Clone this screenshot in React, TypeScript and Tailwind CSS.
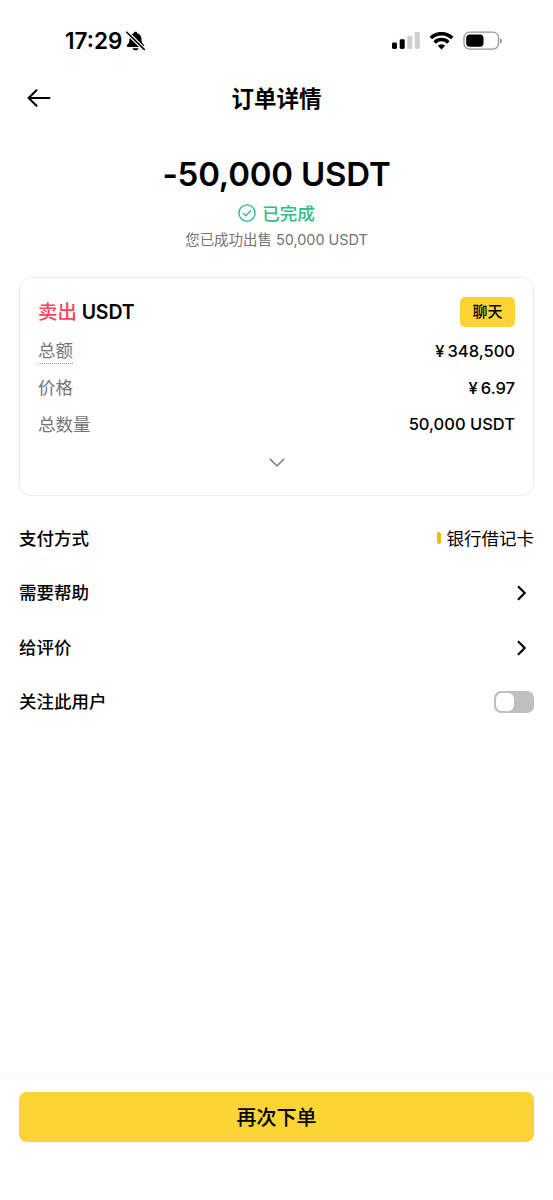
import { useState } from 'react'

const details = [
  { label: '总额', value: '348,500', currency: true, hint: true },
  { label: '价格', value: '6.97', currency: true, hint: false },
  { label: '总数量', value: '50,000 USDT', currency: false, hint: false },
]

function StatusBar() {
  return (
    <div className="flex h-[82px] items-center justify-between pl-[65px] pr-[50px]">
      <div className="flex items-center gap-1">
        <span className="text-[22.5px] font-semibold leading-none">17:29</span>
        <svg className="h-5 w-[19px]" viewBox="0 0 19 20">
          <path
            d="M9.5.8c-1.1 0-1.8.7-1.9 1.5C4.9 3.2 3.5 5.4 3.5 8.2c0 3.3-.9 4.1-2.3 5.600-.9 1-.4 2.200.8 2.200h15c1.200 0 1.700-1.200.8-2.200-1.400-1.500-2.300-2.300-2.300-5.600 0-2.800-1.400-5-4.100-5.900C11.300 1.500 10.600.8 9.500.8zM6.500 17.200h6c-.3 1.300-1.500 2.100-3 2.100s-2.700-.8-3-2.100z"
            fill="black"
          />
          <path d="M.6 1 18.400 18.600" stroke="#fefefe" strokeWidth="4" />
          <path d="M.8 1.200 18.200 18.400" stroke="black" strokeWidth="1.6" strokeLinecap="round" />
        </svg>
      </div>

      <div className="flex items-center">
        <svg className="h-[18px] w-[28px]" viewBox="0 0 28 18">
          <rect x="0" y="10.5" width="5" height="6.5" rx="1.4" fill="black" />
          <rect x="7.7" y="7.3" width="5" height="9.7" rx="1.4" fill="black" />
          <rect x="15.3" y="3.8" width="5" height="13.2" rx="1.4" fill="#cfcfcf" />
          <rect x="22.8" y="0" width="5" height="17" rx="1.4" fill="#cfcfcf" />
        </svg>
        <svg className="ml-[9px] h-[18px] w-[25px]" viewBox="0 0 25 18" fill="none" stroke="black" strokeWidth="3.5">
          <path d="M1.8 6a15.400 15.400 0 0 1 21.400 0" />
          <path d="M5.7 10.400a9.700 9.700 0 0 1 13.600 0" />
          <path d="M12.5 17.400 8.800 13.700a5.300 5.300 0 0 1 7.400 0z" fill="black" stroke="none" />
        </svg>
        <svg className="ml-[9px] h-5 w-10" viewBox="0 0 40 20">
          <rect x="1" y="1.2" width="34.5" height="17" rx="5.6" fill="none" stroke="#979797" strokeWidth="1.3" />
          <rect x="3.2" y="3.6" width="17.3" height="12.2" rx="3.6" fill="black" />
          <path d="M37 7.200c1.300.4 2 1.400 2 2.700s-.7 2.300-2 2.700z" fill="#979797" />
        </svg>
      </div>
    </div>
  )
}

function ArrowRight() {
  return (
    <svg className="mr-2 h-4 w-[9px]" viewBox="0 0 9 16" fill="none" stroke="black" strokeWidth="2.1">
      <path d="m1 1.200 6.700 6.800L1 14.800" />
    </svg>
  )
}

function Toggle() {
  const [on, setOn] = useState(false)

  return (
    <button
      onClick={() => setOn(!on)}
      className={`flex h-[22px] w-10 items-center rounded-[7px] px-[2px] ${on ? 'justify-end bg-[#fcd535]' : 'justify-start bg-[#bfbfbf]'}`}
    >
      <span className="h-[18px] w-[18px] rounded-[6px] bg-white" />
    </button>
  )
}

export default function App() {
  return (
    <div className="flex h-[1200px] w-full flex-col bg-[#fefefe] font-['Inter','Noto_Sans_CJK_SC',sans-serif] text-black">
      <StatusBar />

      {/* Header */}
      <header className="grid h-8 grid-cols-3 items-center px-[27px]">
        <svg className="h-[18px] w-6" viewBox="0 0 24 18" fill="none" stroke="black" strokeWidth="2" strokeLinecap="round">
          <path d="M22.500 9H1.800M9.500 1.200 1.600 9l7.900 7.800" />
        </svg>
        <h1 className="pt-[2px] text-center text-[22.5px] font-semibold leading-[30px]">订单详情</h1>
      </header>

      {/* Amount */}
      <section className="mt-[37px] flex flex-col items-center">
        <div className="text-[33px] font-semibold leading-[46px] tracking-[-0.2px]">-50,000 USDT</div>
        <div className="mt-1 flex h-6 items-center gap-[6px] text-[17.5px] leading-[22px] text-[#2ebd85]">
          <svg className="h-[18px] w-[18px]" viewBox="0 0 18 18" fill="none" stroke="#2ebd85" strokeWidth="1.4">
            <circle cx="9" cy="9" r="8.1" />
            <path d="m5.200 9.200 2.700 2.600 5-5.200" />
          </svg>
          <span className="pt-px font-medium">已完成</span>
        </div>
        <div className="mt-1 pt-px text-[14.5px] leading-5 tracking-[-0.05px] text-[#757575]">您已成功出售 50,000 USDT</div>
      </section>

      {/* Order card */}
      <section className="mx-[19px] mt-[27px] h-[219px] rounded-xl border border-[#ebebeb] px-[18px] pt-[18px]">
        <div className="flex h-[31px] items-center justify-between">
          <h2 className="pt-[2px] text-[19.5px] font-semibold leading-none tracking-[-0.1px]">
            <span className="font-medium text-[#f6465d]">卖出</span> USDT
          </h2>
          <button className="h-[30px] w-[55px] rounded-[5px] bg-[#fcd535] pt-[2px] text-[15px] font-medium">聊天</button>
        </div>
        <div className="mt-[6px]">
          {details.map((row) => (
            <div key={row.label} className="flex h-[36.5px] items-center justify-between">
              <span
                className={`text-[17.5px] leading-[24px] text-[#757575] ${row.hint ? 'border-b border-dotted border-[#9a9a9a] pt-px' : 'pt-px'}`}
              >
                {row.label}
              </span>
              <span className="flex gap-[3px] pt-px text-[16.5px] font-medium">
                {row.currency && <span>¥</span>}
                <span>{row.value}</span>
              </span>
            </div>
          ))}
        </div>
        <svg className="mx-auto mt-[15px] h-[9px] w-4" viewBox="0 0 16 9" fill="none" stroke="#8a8a8a" strokeWidth="1.7">
          <path d="m.8.9 7.200 6.900L15.200.9" />
        </svg>
      </section>

      {/* Options */}
      <section className="mt-[15px] px-[19px] text-[17.5px]">
        <div className="flex h-[54.7px] items-center justify-between">
          <span className="pt-px font-medium">支付方式</span>
          <span className="flex items-center gap-[6px]">
            <i className="h-3 w-1 rounded-full bg-[#f0b90b]" />
            <span className="pt-px">银行借记卡</span>
          </span>
        </div>
        <div className="flex h-[54.7px] items-center justify-between">
          <span className="font-medium">需要帮助</span>
          <ArrowRight />
        </div>
        <div className="flex h-[54.7px] items-center justify-between">
          <span className="pt-px font-medium">给评价</span>
          <ArrowRight />
        </div>
        <div className="flex h-[54.7px] items-center justify-between">
          <span className="font-medium">关注此用户</span>
          <Toggle />
        </div>
      </section>

      {/* Footer */}
      <footer className="mt-auto h-[124px] border-t border-[#f5f5f5] px-[19px] pt-[15px]">
        <button className="h-[50px] w-full rounded-lg bg-[#fcd535] pt-[2px] text-[20px] font-medium">再次下单</button>
      </footer>
    </div>
  )
}
